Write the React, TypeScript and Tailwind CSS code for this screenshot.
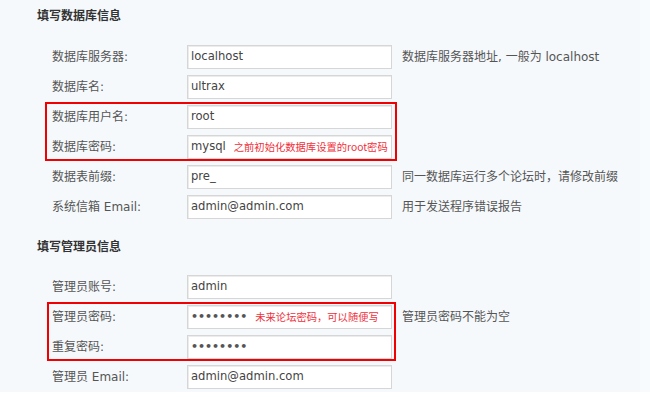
import React from "react";

interface Field {
  label: string;
  value: string;
  note?: string;
  hint?: string;
  secret?: boolean;
}

const dbFields: Field[] = [
  { label: "数据库服务器:", value: "localhost", hint: "数据库服务器地址, 一般为 localhost" },
  { label: "数据库名:", value: "ultrax" },
  { label: "数据库用户名:", value: "root" },
  { label: "数据库密码:", value: "mysql", note: "之前初始化数据库设置的root密码" },
  { label: "数据表前缀:", value: "pre_", hint: "同一数据库运行多个论坛时，请修改前缀" },
  { label: "系统信箱 Email:", value: "admin@admin.com", hint: "用于发送程序错误报告" },
];

const adminFields: Field[] = [
  { label: "管理员账号:", value: "admin" },
  { label: "管理员密码:", value: "••••••••", secret: true, note: "未来论坛密码，可以随便写", hint: "管理员密码不能为空" },
  { label: "重复密码:", value: "••••••••", secret: true },
  { label: "管理员 Email:", value: "admin@admin.com" },
];

const font = "font-['DejaVu_Sans','Noto_Sans_CJK_SC',sans-serif]";

const Row = ({ f }: { f: Field }) => (
  <div className="flex h-[30px] items-center">
    <div className="w-[135px] shrink-0 text-[12px] text-[#555]">{f.label}</div>
    <div className="flex h-[24px] w-[205px] shrink-0 items-center border border-[#d6d6d6] bg-white pl-[3px] shadow-[inset_1px_1px_0_#ececec]">
      <span className={f.secret ? "text-[11px] font-bold text-[#555]" : "text-[11.6px] text-[#444]"}>
        {f.value}
      </span>
      {f.note && (
        <span className="ml-[8px] font-['Noto_Sans_CJK_SC',sans-serif] text-[10.3px] text-[#f0303a]">
          {f.note}
        </span>
      )}
    </div>
    {f.hint && <div className="ml-[10px] whitespace-nowrap text-[12px] text-[#555]">{f.hint}</div>}
  </div>
);

const Section = ({
  title,
  fields,
  box,
  boxClass,
}: {
  title: string;
  fields: Field[];
  box: number;
  boxClass: string;
}) => (
  <div>
    <div className="flex h-[16px] items-center pl-[37px] text-[12px] font-bold text-[#333]">{title}</div>
    <div className="relative mt-[17.5px] pl-[52px]">
      {fields.map((f) => (
        <Row key={f.label} f={f} />
      ))}
      {/* red annotation box */}
      <div
        className={`pointer-events-none absolute h-[59px] border-2 border-[#f00000] ${boxClass}`}
        style={{ top: box * 30 }}
      />
    </div>
  </div>
);

export default function App() {
  return (
    <div className={`h-[397px] w-[650px] overflow-hidden bg-white ${font}`}>
      <div className="flex h-[392px]">
        <div className="w-[640px] bg-[#f5f9fc] pt-[8px]">
          <Section title="填写数据库信息" fields={dbFields} box={2} boxClass="left-[45px] w-[352px]" />
          <div className="mt-[17px]">
            <Section title="填写管理员信息" fields={adminFields} box={1} boxClass="left-[47px] w-[349px]" />
          </div>
        </div>
        <div className="w-[10px] bg-[#f8fbfd]" />
      </div>
    </div>
  );
}
